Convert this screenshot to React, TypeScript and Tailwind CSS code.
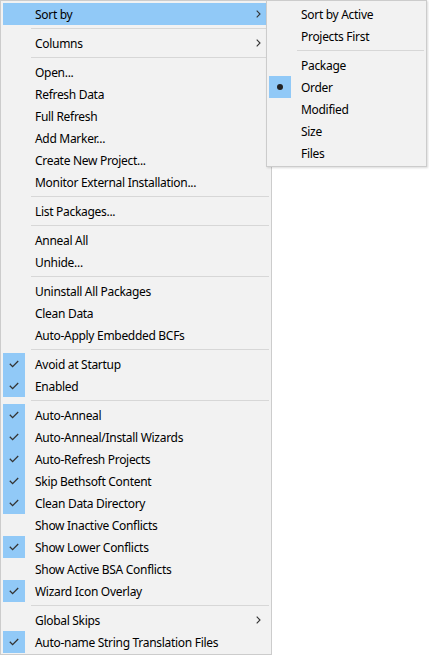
import React from "react";

type Item =
  | { kind: "sep" }
  | { kind: "item"; label: string; checked?: boolean; radio?: boolean; sub?: boolean; hot?: boolean };

const sep: Item = { kind: "sep" };
const it = (label: string, opts: Partial<{ checked: boolean; radio: boolean; sub: boolean; hot: boolean }> = {}): Item => ({
  kind: "item",
  label,
  ...opts,
});

const mainItems: Item[] = [
  it("Sort by", { sub: true, hot: true }),
  sep,
  it("Columns", { sub: true }),
  sep,
  it("Open..."),
  it("Refresh Data"),
  it("Full Refresh"),
  it("Add Marker..."),
  it("Create New Project..."),
  it("Monitor External Installation..."),
  sep,
  it("List Packages..."),
  sep,
  it("Anneal All"),
  it("Unhide..."),
  sep,
  it("Uninstall All Packages"),
  it("Clean Data"),
  it("Auto-Apply Embedded BCFs"),
  sep,
  it("Avoid at Startup", { checked: true }),
  it("Enabled", { checked: true }),
  sep,
  it("Auto-Anneal", { checked: true }),
  it("Auto-Anneal/Install Wizards", { checked: true }),
  it("Auto-Refresh Projects", { checked: true }),
  it("Skip Bethsoft Content", { checked: true }),
  it("Clean Data Directory", { checked: true }),
  it("Show Inactive Conflicts"),
  it("Show Lower Conflicts", { checked: true }),
  it("Show Active BSA Conflicts"),
  it("Wizard Icon Overlay", { checked: true }),
  sep,
  it("Global Skips", { sub: true }),
  it("Auto-name String Translation Files", { checked: true }),
];

const sortItems: Item[] = [
  it("Sort by Active"),
  it("Projects First"),
  sep,
  it("Package"),
  it("Order", { radio: true }),
  it("Modified"),
  it("Size"),
  it("Files"),
];

function Check() {
  return (
    <svg width="10" height="8" viewBox="0 0 10 8">
      <path d="M0.8 3.8 L3.6 6.6 L9.2 1" fill="none" stroke="#333" strokeWidth="1.3" />
    </svg>
  );
}

function Chevron() {
  return (
    <svg width="5" height="8" viewBox="0 0 5 8">
      <path d="M0.7 0.7 L4 4 L0.7 7.3" fill="none" stroke="#333" strokeWidth="1.1" />
    </svg>
  );
}

function MenuRow({ item }: { item: Item }) {
  if (item.kind === "sep") {
    return (
      <div className="h-[7px] pl-[28px] flex items-center">
        <div className="h-px w-full bg-[#d7d7d7]" />
      </div>
    );
  }
  const marked = item.checked || item.radio;
  return (
    <div className={`h-[22px] flex items-center ${item.hot ? "bg-[#91c9f7]" : ""}`}>
      <div className={`w-[22px] h-[22px] flex items-center justify-center ${marked ? "bg-[#91c9f7]" : ""}`}>
        {item.checked && <Check />}
        {item.radio && <div className="w-[6px] h-[6px] rounded-full bg-[#222]" />}
      </div>
      <span className="ml-[10px] pt-px flex-1 text-[12px] tracking-[-0.3px] text-black whitespace-nowrap leading-none">
        {item.label}
      </span>
      {item.sub && (
        <span className="w-[13px] flex items-center">
          <Chevron />
        </span>
      )}
    </div>
  );
}

export default function App() {
  return (
    <div
      className="relative w-[429px] h-[656px] bg-white"
      style={{ fontFamily: '"Noto Sans", "Open Sans", sans-serif' }}
    >
      <div className="w-[272px] border border-[#cccccc] bg-[#f2f2f2] pt-[2px] px-[2px] pb-px">
        {mainItems.map((m, i) => (
          <MenuRow key={i} item={m} />
        ))}
      </div>
      <div className="absolute left-[266px] top-0 w-[161px] border border-[#cccccc] bg-[#f2f2f2] p-[2px] shadow-[1px_1px_2px_rgba(0,0,0,0.15)]">
        {sortItems.map((m, i) => (
          <MenuRow key={i} item={m} />
        ))}
      </div>
    </div>
  );
}
